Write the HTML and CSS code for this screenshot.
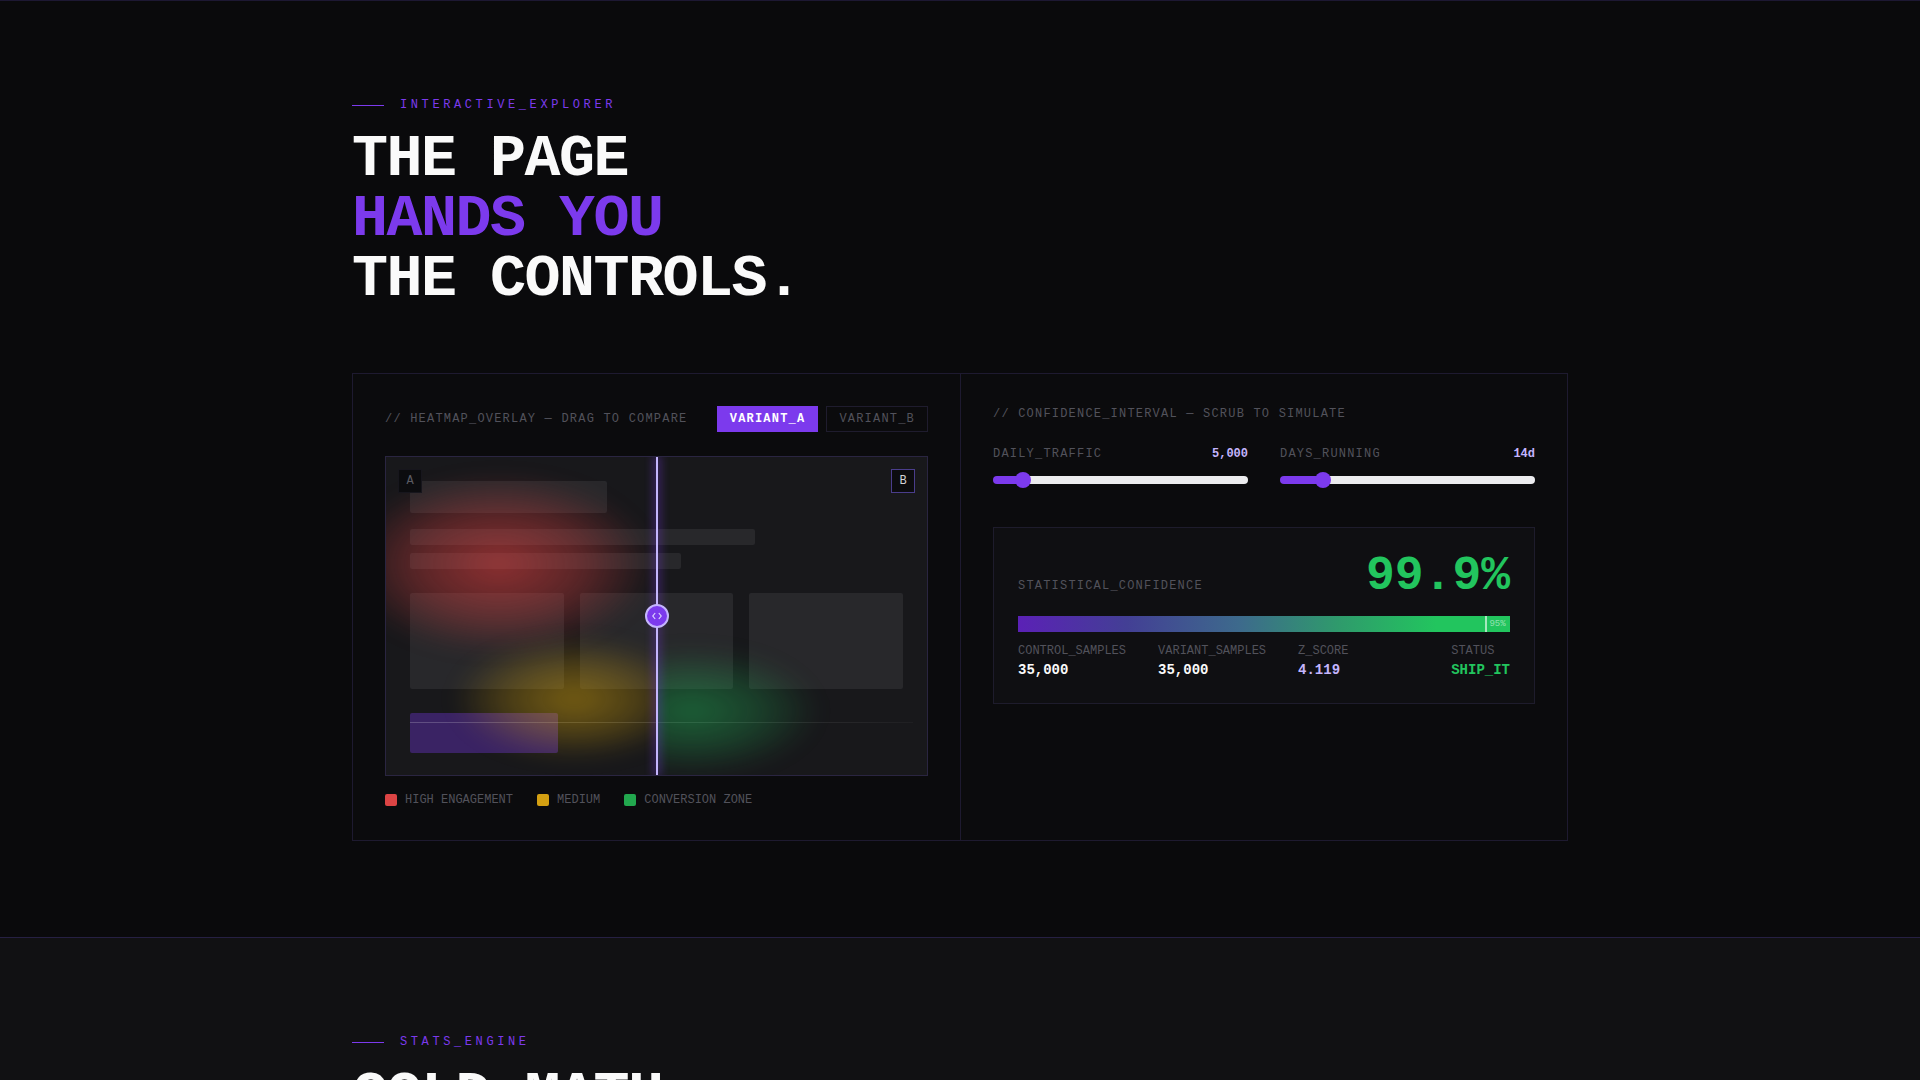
FILE: index.html
```html
<!DOCTYPE html>
<html lang="en">
	<head>
		<meta charset="UTF-8">
		<title>Interactive Explorer</title>
		<link rel="stylesheet" href="styles.css">
	</head>
	<body>
		<section class="section">
			<div class="wrap">
				<div class="eyebrow">INTERACTIVE_EXPLORER</div>
				<h2 class="headline">THE PAGE<br><span class="accent">HANDS YOU</span><br>THE CONTROLS.</h2>

				<div class="explorer">
					<!-- heatmap compare -->
					<div class="pane">
						<div class="pane-head">
							<span class="pane-title">// HEATMAP_OVERLAY — DRAG TO COMPARE</span>
							<div class="toggle">
								<button class="toggle-btn active">VARIANT_A</button>
								<button class="toggle-btn">VARIANT_B</button>
							</div>
						</div>
						<div class="heatmap">
							<div class="mock">
								<div class="sk sk-title"></div>
								<div class="sk sk-line"></div>
								<div class="sk sk-line sk-short"></div>
								<div class="sk-cards">
									<div class="sk"></div>
									<div class="sk"></div>
									<div class="sk"></div>
								</div>
								<div class="sk sk-cta"></div>
							</div>
							<div class="fold"></div>
							<div class="heat heat-a">
								<span class="blob blob-red"></span>
								<span class="blob blob-yellow"></span>
							</div>
							<div class="heat heat-b">
								<span class="blob blob-green"></span>
							</div>
							<span class="tag tag-a">A</span>
							<span class="tag tag-b">B</span>
							<div class="split">
								<span class="handle">
									<svg width="10" height="8" viewBox="0 0 10 8"><path d="M3.2 1 .8 4l2.4 3M6.8 1l2.4 3-2.4 3" fill="none" stroke="#ddd6fe" stroke-width="1.2"/></svg>
								</span>
							</div>
						</div>
						<ul class="legend">
							<li><i class="dot dot-red"></i>HIGH ENGAGEMENT</li>
							<li><i class="dot dot-yellow"></i>MEDIUM</li>
							<li><i class="dot dot-green"></i>CONVERSION ZONE</li>
						</ul>
					</div>

					<!-- confidence simulator -->
					<div class="pane pane-right">
						<div class="pane-title">// CONFIDENCE_INTERVAL — SCRUB TO SIMULATE</div>
						<div class="sliders">
							<label class="slider">
								<span class="slider-head"><span>DAILY_TRAFFIC</span><b>5,000</b></span>
								<input class="range" type="range" min="500" max="50000" step="500" value="5000" style="--fill: 11.6%">
							</label>
							<label class="slider">
								<span class="slider-head"><span>DAYS_RUNNING</span><b>14d</b></span>
								<input class="range" type="range" min="1" max="91" value="14" style="--fill: 16.9%">
							</label>
						</div>

						<div class="result">
							<div class="result-top">
								<span class="result-label">STATISTICAL_CONFIDENCE</span>
								<span class="result-value">99.9%</span>
							</div>
							<div class="bar">
								<div class="bar-fill" style="width: 99.9%"></div>
								<span class="bar-mark"></span>
								<span class="bar-mark-label">95%</span>
							</div>
							<div class="stats">
								<div class="stat"><span>CONTROL_SAMPLES</span><b>35,000</b></div>
								<div class="stat"><span>VARIANT_SAMPLES</span><b>35,000</b></div>
								<div class="stat"><span>Z_SCORE</span><b class="violet">4.119</b></div>
								<div class="stat stat-end"><span>STATUS</span><b class="green">SHIP_IT</b></div>
							</div>
						</div>
					</div>
				</div>
			</div>
		</section>

		<section class="section section-alt">
			<div class="wrap">
				<div class="eyebrow">STATS_ENGINE</div>
				<h2 class="headline">COLD MATH</h2>
			</div>
		</section>
	</body>
</html>
```

FILE: styles.css
```css
*{
	padding: 0;
	margin: 0;
	box-sizing: border-box;
}
body{
	background: #0a0a0c;
	color: #fafafa;
	font-family: "Liberation Mono", "DejaVu Sans Mono", monospace;
	font-size: 12px;
}
ul,li{
	list-style: none;
}
button{
	font: inherit;
	cursor: pointer;
}

.section {
	padding: 96px 0;
	border-top: 1px solid #1d1833;
}
.section-alt {
	background: #111113;
	border-top-color: #262043;
	min-height: 400px;
}
.wrap {
	max-width: 1280px;
	margin: 0 auto;
	padding: 0 32px;
}

/* section label + big title */
.eyebrow {
	display: flex;
	align-items: center;
	gap: 16px;
	font-size: 12px;
	line-height: 16px;
	letter-spacing: 0.3em;
	color: #7c3aed;
}
.eyebrow::before {
	content: "";
	width: 32px;
	height: 1px;
	background: #7c3aed;
}
.headline {
	margin-top: 16px;
	font-size: 60px;
	line-height: 1;
	letter-spacing: -0.025em;
	font-weight: 700;
	color: #fafafa;
}
.accent {
	color: #7c3aed;
}

/* two pane box */
.explorer {
	margin-top: 64px;
	display: grid;
	grid-template-columns: 1fr 1fr;
	border: 1px solid #1e1a30;
	background: #0b0b0d;
}
.pane {
	padding: 32px;
}
.pane-right {
	border-left: 1px solid #1e1a30;
}
.pane-head {
	display: flex;
	justify-content: space-between;
	align-items: center;
	margin-bottom: 24px;
}
.pane-title {
	font-size: 12px;
	line-height: 16px;
	letter-spacing: 0.1em;
	color: #52525b;
}
.toggle {
	display: flex;
	gap: 8px;
}
.toggle-btn {
	height: 26px;
	padding: 0 12px;
	font-size: 12px;
	letter-spacing: 0.1em;
	background: transparent;
	color: #52525b;
	border: 1px solid #1f1c2e;
}
.toggle-btn.active {
	background: #7c3aed;
	border-color: #7c3aed;
	color: #fff;
	font-weight: 700;
}

/* heatmap */
.heatmap {
	position: relative;
	height: 320px;
	border: 1px solid #2a2541;
	background: #18181b;
	overflow: hidden;
}
.mock {
	padding: 24px;
}
.sk {
	background: #28282b;
	border-radius: 2px;
}
.sk-title {
	width: 40%;
	height: 32px;
	margin-bottom: 16px;
}
.sk-line {
	width: 70%;
	height: 16px;
	margin-bottom: 8px;
}
.sk-short {
	width: 55%;
	margin-bottom: 24px;
}
.sk-cards {
	display: grid;
	grid-template-columns: repeat(3, 1fr);
	gap: 16px;
	height: 96px;
	margin-bottom: 24px;
}
.sk-cta {
	width: 30%;
	height: 40px;
	background: rgba(124, 58, 237, 0.35);
}
.fold {
	position: absolute;
	left: 24px;
	right: 14px;
	top: 265px;
	height: 1px;
	background: linear-gradient(90deg, rgba(255,255,255,0.2), rgba(255,255,255,0.12) 60%, rgba(255,255,255,0.03));
}
.heat {
	position: absolute;
	inset: 0;
	pointer-events: none;
}
.heat-a {
	clip-path: inset(0 50% 0 0);
}
.heat-b {
	clip-path: inset(0 0 0 50%);
}
.blob {
	position: absolute;
	border-radius: 50%;
	filter: blur(10px);
}
.blob-red {
	left: -42px;
	top: 17px;
	width: 310px;
	height: 180px;
	background: radial-gradient(closest-side, rgba(239,68,68,0.55), rgba(239,68,68,0.3) 55%, rgba(239,68,68,0));
}
.blob-yellow {
	left: 66px;
	top: 180px;
	width: 244px;
	height: 124px;
	background: radial-gradient(closest-side, rgba(234,179,8,0.45), rgba(234,179,8,0.24) 55%, rgba(234,179,8,0));
}
.blob-green {
	left: 178px;
	top: 190px;
	width: 256px;
	height: 128px;
	background: radial-gradient(closest-side, rgba(34,197,94,0.42), rgba(34,197,94,0.22) 55%, rgba(34,197,94,0));
}
.tag {
	position: absolute;
	top: 12px;
	width: 24px;
	height: 24px;
	line-height: 22px;
	text-align: center;
	font-size: 12px;
	background: #0c0c0f;
	border: 1px solid #17161d;
	color: #5b5b63;
}
.tag-a {
	left: 12px;
}
.tag-b {
	right: 12px;
	border-color: #4a3d8c;
	color: #d4d4d8;
}
.split {
	position: absolute;
	top: 0;
	bottom: 0;
	left: 50%;
	width: 2px;
	margin-left: -1px;
	background: #c4b5fd;
	box-shadow: 0 0 10px 2px rgba(124, 58, 237, 0.45);
}
.handle {
	position: absolute;
	top: 50%;
	left: 50%;
	width: 24px;
	height: 24px;
	margin: -12px 0 0 -12px;
	border-radius: 50%;
	background: #7c3aed;
	border: 2px solid #c4b5fd;
	display: flex;
	align-items: center;
	justify-content: center;
}
.legend {
	display: flex;
	gap: 24px;
	margin-top: 16px;
	color: #52525b;
	font-size: 12px;
	line-height: 16px;
}
.legend li {
	display: flex;
	align-items: center;
	gap: 8px;
}
.dot {
	width: 12px;
	height: 12px;
	border-radius: 2px;
}
.dot-red { background: #dc4444; }
.dot-yellow { background: #d4a012; }
.dot-green { background: #22a84e; }

/* sliders */
.sliders {
	display: grid;
	grid-template-columns: 1fr 1fr;
	gap: 32px;
	margin-top: 24px;
}
.slider {
	display: block;
}
.slider-head {
	display: flex;
	justify-content: space-between;
	line-height: 16px;
	letter-spacing: 0.1em;
	color: #52525b;
}
.slider-head b {
	color: #c4b5fd;
	letter-spacing: 0;
}
.range {
	-webkit-appearance: none;
	appearance: none;
	display: block;
	width: 100%;
	height: 16px;
	margin-top: 10px;
	background: transparent;
}
.range::-webkit-slider-runnable-track {
	height: 8px;
	border-radius: 4px;
	background: linear-gradient(90deg, #7c3aed var(--fill), #ececef var(--fill));
}
.range::-webkit-slider-thumb {
	-webkit-appearance: none;
	width: 16px;
	height: 16px;
	margin-top: -4px;
	border-radius: 50%;
	background: #7c3aed;
	border: none;
}

/* result card */
.result {
	margin-top: 39px;
	padding: 24px;
	border: 1px solid #1e1c2c;
	background: #0f0f12;
}
.result-top {
	display: flex;
	justify-content: space-between;
	align-items: baseline;
}
.result-label {
	letter-spacing: 0.1em;
	color: #52525b;
}
.result-value {
	font-size: 48px;
	line-height: 1;
	font-weight: 700;
	color: #22c55e;
}
.bar {
	position: relative;
	height: 16px;
	margin-top: 16px;
	background: #1c1c20;
}
.bar-fill {
	height: 100%;
	background: linear-gradient(90deg, #5b21b6, #433f95 22%, #3d6a8c 45%, #2f9a6c 65%, #22c55e 85%);
}
.bar-mark {
	position: absolute;
	top: 0;
	bottom: 0;
	left: 95%;
	width: 2px;
	background: rgba(255, 255, 255, 0.6);
}
.bar-mark-label {
	position: absolute;
	top: 0;
	left: calc(95% + 4px);
	font-size: 9px;
	line-height: 16px;
	color: rgba(255, 255, 255, 0.5);
}
.stats {
	display: flex;
	gap: 32px;
	margin-top: 11px;
}
.stat span {
	display: block;
	line-height: 16px;
	color: #52525b;
}
.stat b {
	display: block;
	margin-top: 2px;
	font-size: 14px;
	line-height: 18px;
	color: #fafafa;
}
.stat-end {
	margin-left: auto;
}
.stat b.violet { color: #c4b5fd; }
.stat b.green { color: #22c55e; }
```
